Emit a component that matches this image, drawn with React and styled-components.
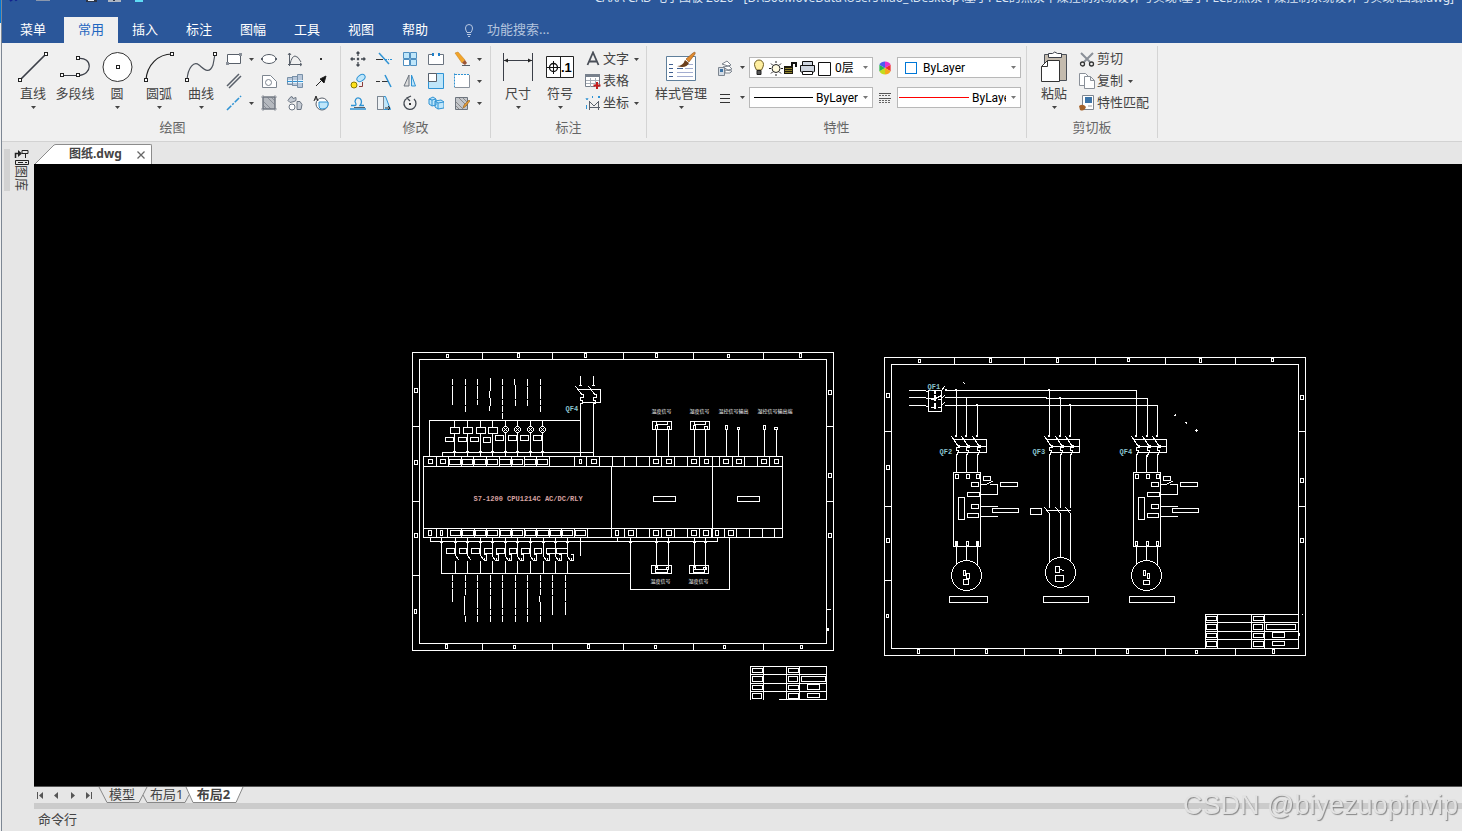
import React, { useState } from "react";
import styled, { createGlobalStyle } from "styled-components";

/* ---------- drawing data: [x1, y1, x2, y2] in screen units ---------- */

const sheetOneBoxes = [
  [412, 352, 833, 650], [419, 359, 826, 643],
  [446, 354, 448, 357], [517, 353, 519, 357], [584, 353, 586, 357],
  [655, 353, 657, 357], [727, 354, 729, 357], [799, 353, 801, 357],
  [414, 388, 417, 392], [414, 460, 417, 464], [414, 533, 417, 537], [414, 609, 416, 613],
  [828, 390, 831, 394], [828, 473, 831, 477], [828, 533, 831, 537],
  [445, 644, 447, 648], [513, 645, 515, 648], [587, 644, 589, 648],
  [654, 645, 656, 648], [723, 645, 725, 648], [800, 645, 802, 648],
];

const sheetOneTicks = [
  [482, 352, 482, 359], [552, 352, 552, 359], [623, 352, 623, 359], [693, 352, 693, 359], [763, 352, 763, 359],
  [482, 643, 482, 650], [552, 643, 552, 650], [623, 643, 623, 650], [693, 643, 693, 650], [763, 643, 763, 650],
  [412, 426, 419, 426], [412, 501, 419, 501], [412, 575, 419, 575],
  [826, 426, 833, 426], [826, 501, 833, 501], [826, 609, 830, 609],
];

const sheetTwoBoxes = [
  [884, 357, 1305, 655], [891, 364, 1298, 648],
  [918, 359, 920, 362], [989, 358, 991, 362], [1056, 358, 1058, 362],
  [1127, 358, 1129, 361], [1199, 358, 1201, 362], [1271, 358, 1273, 361],
  [886, 393, 889, 397], [886, 465, 889, 469], [886, 538, 889, 542], [886, 614, 888, 617],
  [1300, 395, 1303, 399], [1300, 478, 1303, 482], [1300, 538, 1303, 542],
  [917, 649, 919, 653], [985, 649, 987, 653], [1059, 649, 1061, 653],
  [1126, 649, 1128, 653], [1195, 650, 1197, 653], [1272, 649, 1274, 653],
];

const sheetTwoTicks = [
  [954, 357, 954, 364], [1024, 357, 1024, 364], [1095, 357, 1095, 364], [1165, 357, 1165, 364], [1235, 357, 1235, 364],
  [954, 648, 954, 655], [1024, 648, 1024, 655], [1095, 648, 1095, 655], [1165, 648, 1165, 655], [1235, 648, 1235, 655],
  [884, 431, 891, 431], [884, 506, 891, 506], [884, 580, 891, 580],
  [1298, 431, 1305, 431], [1298, 506, 1305, 506],
];

const titleBlockBoxes = [
  [752, 668, 762, 672], [788, 668, 798, 672],
  [752, 676, 762, 681], [788, 676, 797, 681], [801, 676, 825, 681],
  [752, 685, 762, 689], [788, 685, 798, 689], [807, 684, 819, 689],
  [752, 693, 761, 698], [788, 693, 798, 698], [807, 693, 819, 697],
  [1206, 616, 1216, 620], [1253, 616, 1263, 620],
  [1206, 624, 1216, 629], [1253, 624, 1262, 629], [1266, 624, 1295, 629],
  [1206, 633, 1216, 637], [1253, 633, 1263, 637], [1272, 632, 1284, 637],
  [1206, 641, 1216, 646], [1253, 641, 1263, 646], [1272, 641, 1284, 645],
];

const titleBlockLines = [
  [750, 666, 826, 666], [750, 674, 826, 674], [750, 683, 826, 683], [750, 691, 826, 691], [779, 699, 826, 699],
  [750, 666, 750, 699], [763, 666, 763, 699], [786, 666, 786, 699], [799, 666, 799, 699], [826, 666, 826, 699],
  [1205, 614, 1298, 614], [1205, 622, 1298, 622], [1205, 631, 1298, 631], [1205, 639, 1298, 639],
  [1205, 614, 1205, 648], [1217, 614, 1217, 648], [1251, 614, 1251, 648], [1264, 614, 1264, 648],
];

const terminalsTop = [
  [428, 432], [440, 445], [449, 460], [462, 472], [474, 485], [487, 497], [499, 510], [512, 522],
  [524, 535], [537, 547], [579, 581], [591, 596], [653, 658], [666, 671], [691, 696], [704, 708],
  [723, 728], [736, 741], [761, 766], [774, 778],
];
const terminalsBottom = [
  [428, 431], [440, 442], [450, 460], [462, 473], [475, 485], [487, 497], [500, 510], [512, 522],
  [525, 535], [537, 548], [550, 560], [562, 572], [575, 585], [615, 618], [628, 633], [653, 658],
  [666, 671], [691, 696], [703, 708], [715, 718], [728, 733],
];
const splitsTop = [
  436, 448, 461, 473, 486, 499, 511, 524, 536, 549, 574, 586, 599, 612, 624, 636, 649, 661, 674,
  687, 699, 712, 719, 732, 744, 757, 769,
];
const splitsBottom = [
  436, 447, 461, 474, 486, 499, 511, 524, 536, 549, 561, 574, 587, 611, 624, 636, 649, 661, 674,
  687, 699, 711, 712, 724, 736, 749, 762, 774,
];

const plcBoxes = [
  [423, 456, 782, 537], [423, 466, 782, 528],
  [653, 496, 675, 501], [737, 496, 759, 501],
  ...terminalsTop.map(([a, b]) => [a, 459, b, b - a > 8 ? 464 : 463]),
  ...terminalsBottom.map(([a, b]) => [a, 530, b, 535]),
];
const plcLines = [
  [611, 466, 611, 528], [712, 466, 712, 528],
  ...splitsTop.map((x) => [x, 456, x, 466]),
  ...splitsBottom.map((x) => [x, 528, x, 537]),
];

// output side: relays, lamps and their label frames
const relays = [454, 467, 480, 492];
const lamps = [505, 517, 530, 542];
const outputFrames = [
  [445, 437, 453, 441], [458, 437, 466, 441], [470, 437, 478, 441], [483, 437, 490, 442],
  [495, 435, 503, 440], [508, 435, 516, 440], [520, 435, 528, 440], [533, 435, 541, 440],
];

// input side: one switch per terminal
const inputs = [455, 467, 480, 492, 505, 517, 530, 543, 555, 567];
const inputFrames = [
  [446, 454], [459, 466], [471, 479], [484, 492], [496, 504], [509, 516], [521, 529], [534, 541],
  [546, 555], [556, 567],
];

const upperDashes = [
  [452, [379, 384, 386, 398, 399, 404]],
  [465, [379, 384, 386, 404, 406, 411]],
  [477, [379, 384, 386, 398, 400, 404]],
  [490, [378, 390, 398, 405]],
  [489, [391, 397, 406, 410]],
  [502, [379, 384, 386, 398, 400, 404, 406, 411, 413, 418]],
  [514, [379, 384]],
  [515, [385, 398, 400, 405]],
  [527, [379, 385, 387, 398, 400, 405]],
  [540, [379, 384, 386, 398, 400, 404, 406, 411]],
];
const lowerDashes = [
  [452, [575, 580, 582, 587, 589, 601]],
  [465, [575, 580, 582, 587, 589, 594, 616, 621]],
  [464, [596, 614]],
  [477, [575, 580, 582, 587, 589, 607, 609, 614, 616, 621]],
  [490, [575, 580, 582, 587, 589, 594, 596, 608, 610, 614, 616, 621]],
  [502, [575, 580, 582, 587, 589, 607, 609, 614, 616, 621]],
  [515, [575, 580, 582, 587, 589, 607, 609, 614, 616, 621]],
  [527, [575, 580, 582, 587, 589, 607, 609, 614, 616, 621]],
  [540, [575, 580, 582, 587, 589, 594, 602, 614, 616, 621]],
  [539, [596, 601]],
  [552, [575, 580, 582, 587, 589, 594, 596, 614]],
  [565, [575, 580, 582, 587, 589, 600, 602, 614]],
];

const dashLines = [...upperDashes, ...lowerDashes].flatMap(([x, ys]) => {
  const out = [];
  for (let i = 0; i < ys.length; i += 2) out.push([x, ys[i], x, ys[i + 1]]);
  return out;
});

const wiringLines = [
  [429, 420, 580, 420], [429, 420, 429, 456], [442, 452, 593, 452], [442, 452, 442, 456],
  [580, 405, 580, 456], [593, 405, 593, 456], [580, 376, 580, 385], [593, 376, 593, 385],
  [656, 429, 656, 456], [668, 429, 668, 456], [694, 429, 694, 456], [705, 429, 705, 456],
  [726, 429, 726, 456], [738, 429, 738, 456], [764, 429, 764, 456], [776, 429, 776, 456],
  [430, 541, 717, 541], [430, 537, 430, 541], [717, 537, 717, 541], [617, 537, 617, 541],
  [441, 537, 441, 573], [441, 573, 630, 573], [630, 537, 630, 589], [630, 589, 729, 589],
  [729, 537, 729, 589], [580, 537, 580, 555],
  [656, 537, 656, 567], [668, 537, 668, 568], [694, 537, 694, 567], [705, 537, 705, 568],
];
const wiringBoxes = [
  [652, 421, 671, 429], [656, 421, 667, 424], [655, 425, 657, 429], [667, 426, 669, 429],
  [690, 421, 709, 429], [694, 421, 705, 424], [693, 425, 695, 429], [704, 426, 707, 429],
  [651, 565, 671, 573], [655, 565, 657, 569], [655, 569, 667, 572], [666, 567, 668, 569],
  [689, 565, 708, 573], [693, 565, 695, 569], [693, 569, 704, 572], [703, 567, 706, 569],
  [725, 425, 727, 429], [737, 427, 739, 429], [763, 425, 765, 429], [774, 427, 777, 429],
];

const boxPath = (list) => list.map(([a, b, c, d]) => `M${a} ${b}H${c}V${d}H${a}Z`).join("");
const linePath = (list) => list.map(([a, b, c, d]) => `M${a} ${b}L${c} ${d}`).join("");

const breakerPole = (x) =>
  `M${x - 5} 436L${x} 443M${x} 443l1 2h2v2h-3v3h2v2h-1v2h-1v2M${x - 1} 435h1v1h-1z`;

const Breaker = ({ poles, label }) => {
  const [a, , c] = poles;
  return (
    <>
      <path d={`M${a - 2} 439H${c + 9}V452H${a + 2}M${a + 2} 446H${c + 9}`} />
      {poles.map((x) => (
        <path key={x} d={breakerPole(x)} />
      ))}
      <CadText x={a - 17} y={453}>{label}</CadText>
    </>
  );
};

const Drive = ({ dx, solid }) => (
  <g transform={`translate(${dx} 0)`}>
    <path
      d={boxPath([
        [953, 472, 980, 546], [955, 474, 958, 478], [966, 474, 969, 478], [976, 474, 979, 478],
        [971, 482, 978, 486], [967, 492, 979, 496], [971, 504, 978, 508], [967, 513, 978, 517],
        [958, 497, 964, 519], [955, 541, 957, 545], [966, 541, 968, 545], [976, 541, 978, 545],
        [983, 476, 990, 480], [1000, 482, 1017, 486], [992, 508, 1018, 512],
      ])}
    />
    {solid && <path d="M956 541v4M977 541v4" />}
    <path d="M980 484h5l7 -3M990 484H997V494H980M980 506H997M980 516H997" />
    <path d="M956 455V472M966 455V472M977 455V472M956 546V564M966 546V560M977 546V565" />
  </g>
);

const Schematic = () => (
  <Drawing width="1428" height="622" viewBox="34 164 1428 622" role="img" aria-label="图纸">
    <g transform="translate(0.5 0.5)">
      <path d={boxPath(sheetOneBoxes) + linePath(sheetOneTicks)} />
      <path d={boxPath(sheetTwoBoxes) + linePath(sheetTwoTicks)} />
      <path d={boxPath(titleBlockBoxes) + linePath(titleBlockLines)} />
      <path d={boxPath(plcBoxes) + linePath(plcLines)} />
      <path d={linePath(dashLines)} />
      <path d={boxPath(wiringBoxes) + linePath(wiringLines)} />
      <path d={boxPath(outputFrames)} />

      {relays.map((x) => (
        <path key={x} d={`M${x} 420V427M${x - 4} 427H${x + 5}V433H${x - 4}ZM${x} 433V456M${x - 1} 451h2`} />
      ))}
      {lamps.map((x) => (
        <path
          key={x}
          d={`M${x} 420V426M${x} 432V456M${x - 1} 451h2M${x - 1} 426h2l2 2v2l-2 2h-2l-2 -2v-2zM${x - 2} 427l4 4M${x + 2} 427l-4 4`}
        />
      ))}

      {/* QF4 two-pole breaker */}
      <path d="M578 389H600V402H583" />
      {[580, 593].map((x) => (
        <path key={x} d={`M${x - 5} 386L${x} 392l1 2h2v3h-3v3h2v3h-2v3M${x - 1} 385h2`} />
      ))}
      <CadText x={565} y={410}>QF4</CadText>

      {inputs.map((x, i) => (
        <path
          key={x}
          d={
            `M${x} 537V${i > 2 ? 556 : 555}l3 4M${x} 561V573M${x - 1} 542h2` +
            `M${inputFrames[i][0]} 548H${inputFrames[i][1]}V553H${inputFrames[i][0]}Z` +
            (i > 1 ? `M${x + 4} 554h2v6h-2v-2` : "")
          }
        />
      ))}
      {[656, 668, 694, 705, 630, 441].map((x) => (
        <path key={x} d={`M${x - 1} 542h2`} />
      ))}
      <path d="M827 628v2M828 628v2" />

      <CadText x={473} y={500} $warm>S7-1200 CPU1214C AC/DC/RLY</CadText>
      <TinyText x={651} y={412}>温度信号</TinyText>
      <TinyText x={689} y={412}>湿度信号</TinyText>
      <TinyText x={718} y={412}>温控信号输出</TinyText>
      <TinyText x={757} y={412}>湿控信号输出端</TinyText>
      <TinyText x={650} y={582}>温度信号</TinyText>
      <TinyText x={688} y={582}>湿度信号</TinyText>

      {/* main supply */}
      <path d="M909 390H925l3 2M909 397H925l3 2M909 405H925l3 2M928 390H941V411H928Z" />
      <path d="M931 390h3v3h1v-3h3M931 399h3M938 399h3M931 407h3M938 407h3M934 395v5M935 395v5M934 403v5M935 403v5M928 398h6M935 398l6 -3M941 390l3 -4M941 398l3 -3M941 405l3 -3M945 389h1M945 397h1M945 405h1" />
      <path d="M945 390H1136V436M945 397H1046V398H1147V436M945 405H1157V436" />
      <path d="M956 390V436M966 398V436M977 405V436M1049 390V436M1060 398V436M1070 405V436" />
      <path d="M955 389h1M965 397h1M976 404h1M1048 389h1M1059 397h1M1069 404h1" />
      <CadText x={927} y={388}>QF1</CadText>
      <Breaker poles={[956, 966, 977]} label="QF2" />
      <Breaker poles={[1049, 1060, 1070]} label="QF3" />
      <Breaker poles={[1136, 1147, 1157]} label="QF4" />
      <Drive dx={0} solid />
      <Drive dx={180} />

      {/* contactor in the middle branch */}
      <path d="M1030 508H1041V514H1030ZM1047 510H1070" />
      {[1049, 1060, 1070].map((x) => (
        <path key={x} d={`M${x} 455V507M${x - 5} 507L${x} 513V${x === 1060 ? 557 : 561}`} />
      ))}

      <circle cx="966" cy="575" r="15" />
      <circle cx="1060" cy="572" r="15" />
      <circle cx="1146" cy="575" r="15" />
      <path
        d={boxPath([
          [963, 570, 965, 575], [966, 573, 969, 578], [963, 579, 968, 584],
          [1055, 566, 1059, 572], [1055, 575, 1063, 581],
          [1143, 570, 1145, 575], [1147, 573, 1149, 578], [1143, 580, 1149, 584],
          [949, 596, 987, 602], [1043, 596, 1088, 602], [1129, 596, 1174, 602],
        ])}
      />
      <path d="M1060 569l3 1M963 382h0M964 383h0M1174 415h1M1175 414h0M1186 423h0M1185 422h1M1195 430h2M1196 429v2M1302 614h0M1299 633v2" />
    </g>
  </Drawing>
);

/* ---------- icons ---------- */

const Caret = () => (
  <CaretSvg width="5" height="3" viewBox="0 0 5 3">
    <path d="M0 0h5L2.500 3z" fill="currentColor" />
  </CaretSvg>
);

const Node = ({ x, y }) => <rect x={x - 1.5} y={y - 1.5} width="3" height="3" fill="#fff" stroke="#222" />;

const bigIcons = {
  line: (
    <>
      <path d="M3.500 28.500L28.500 3.500" stroke="#3b3f48" strokeWidth="1.700" />
      <Node x={3} y={29} />
      <Node x={29} y={3} />
    </>
  ),
  polyline: (
    <>
      <path d="M3 24.500H19M19 7.500C34 5.500 34 24.500 19 24.500" stroke="#3b3f48" strokeWidth="1.200" />
      <Node x={3} y={24} />
      <Node x={19} y={24} />
      <Node x={19} y={7} />
    </>
  ),
  circle: (
    <>
      <circle cx="16.500" cy="16" r="14.500" fill="#fff" stroke="#333" />
      <Node x={17} y={16} />
    </>
  ),
  arc: (
    <>
      <path d="M3 29C4 14 15 3 29 3" stroke="#222" strokeWidth="1.200" />
      <Node x={3} y={29} />
      <Node x={29} y={3} />
    </>
  ),
  spline: (
    <>
      <path d="M2 29C3 16 9 10 14 14S24 24 28 14Q29 9 30 3" stroke="#4d535c" strokeWidth="1.200" />
      <Node x={2} y={29} />
      <Node x={30} y={3} />
    </>
  ),
  dimension: (
    <>
      <path d="M1.500 2V30M30.500 2V30M2 9.500H30" stroke="#3b3f48" />
      <path d="M2 9.500l4-2v4zM30 9.500l-4-2v4z" fill="#222" />
    </>
  ),
  symbol: (
    <>
      <path d="M2.500 5.500h27v21h-27zM16.500 5.500v21" fill="#fff" stroke="#222" />
      <circle cx="9.500" cy="16.500" r="4" stroke="#111" strokeWidth="1.300" />
      <path d="M3 16.500h13M9.500 10v13" stroke="#111" />
      <text x="17" y="21" fontSize="13" fontWeight="700" fontFamily="Liberation Sans, sans-serif" fill="#000">.1</text>
    </>
  ),
  style: (
    <>
      <path d="M1.500 5.500h29v24h-29z" fill="#fff" stroke="#5f7f9b" />
      <path d="M4 13.500h4M4 17.500h4M4 21.500h4M4 25.500h4M12 17.500h6" stroke="#3f5f90" />
      <path d="M20 17.500h8M12 21.500h16M12 25.500h16M22 13.500h6" stroke="#a3add0" />
      <path d="M21 8l7-6q3-2 2 1l-6 8z" fill="#e08a2d" stroke="#8a4b16" strokeWidth=".6" />
      <path d="M12 15q6 0 8-6l4 3q-3 6-12 3z" fill="#6b3f1d" />
    </>
  ),
  paste: (
    <>
      <path d="M6.500 3.500h22v26h-22z" fill="#c4bbae" stroke="#4a4f57" />
      <path d="M10.500 2.500h4q2-3 5 0h4v4h-13z" fill="#fff" stroke="#3b3f48" />
      <path d="M9.500 9.500h12v21h-18v-15z" fill="#fff" stroke="#333" />
      <path d="M9.500 9.500v6h-6" stroke="#333" />
    </>
  ),
};

const G = "#59606a";
const B = "#2f93d4";
const L = "#bfe6fa";

const smallIcons = {
  rect: (
    <>
      <path d="M1.500 3.500h13v9h-13z" fill="#fff" stroke={G} />
      <path d="M13 2h3v3h-3zM0 11h3v3H0z" fill="#8a9099" />
    </>
  ),
  ellipse: (
    <>
      <ellipse cx="8" cy="8" rx="7" ry="4.500" fill="#fff" stroke={G} />
      <path d="M0 7h2v2H0zM14 7h2v2h-2zM7 3h2v1H7zM7 12h2v1H7z" fill={G} />
    </>
  ),
  graph: <path d="M2.500 2v13M1 13.500h13M3 13Q5 5 8 5t6 6M1 4l1.500-2L4 4M13 12l2 1.500-2 1.500" stroke={G} />,
  point: <path d="M7 7h2v2H7z" fill="#333" />,
  parallel: <path d="M1 13L13 1M3 15L15 3" stroke={G} strokeWidth="1.500" />,
  hole: (
    <>
      <path d="M1.500 2.500h8l6 6v6h-14z" fill="#fff" stroke="#7d858f" />
      <circle cx="7.500" cy="9.500" r="3" stroke="#7d858f" />
    </>
  ),
  shaft: (
    <>
      <path d="M.5 4.500h5v-1h5v-2h5v13h-5v-2h-5v-1h-5z" fill="#b9c8da" stroke="#7890a8" />
      <path d="M1 7h15v3H1z" fill="#e6f5ff" />
      <path d="M0 8.500h16" stroke={B} />
      <path d="M5.500 3v10M10.500 2v12" stroke="#7890a8" />
    </>
  ),
  arrow: <path d="M3 13l6-6M13 3l-2 7-4-4z" fill="#111" stroke="#222" />,
  centerline: <path d="M1 15L15 1" stroke={B} strokeWidth="1.600" strokeDasharray="6 1.500 2 1.500" />,
  hatch: (
    <>
      <path d="M2 2h12v12H2z" fill="#b5b9bf" stroke={G} />
      <path d="M2 6l8 8M2 10l4 4M6 2l8 8M10 2l4 4M0 2h16M2 0v16M14 0v16M0 14h16" stroke="#777d86" strokeWidth=".7" />
    </>
  ),
  gears: (
    <>
      <path d="M3 2.500l2-1 1 2 3-1v3l-2 1-4 1-2-2zM10 6.500h3l2 3-1 5h-4z" fill="#c6ccd4" stroke="#6c7683" />
      <circle cx="5" cy="12" r="3" fill="#fff" stroke="#6c7683" />
    </>
  ),
  detail: (
    <>
      <circle cx="9" cy="9" r="6" fill="#fff" stroke={G} />
      <path d="M6 7h9q1 7-6 7-3 0-3-3z" fill={L} stroke={B} />
      <path d="M1 6l2-5 2 5M2 4h2" stroke="#222" />
    </>
  ),
  move: <path d="M8 1v4M8 11v4M1 8h4M11 8h4M6.500 2.500L8 1l1.500 1.500M6.500 13.500L8 15l1.500-1.500M2.500 6.500L1 8l1.500 1.500M13.500 6.500L15 8l-1.500 1.500M7.500 7.500h1v1h-1z" stroke="#444a52" strokeWidth="1.300" />,
  trim: (
    <>
      <path d="M0 8.500h7" stroke="#333" />
      <path d="M9 8.500h2M12 8.500h1M14 8.500h2" stroke={B} />
      <path d="M3 2l10 11" stroke={B} strokeWidth="1.500" />
    </>
  ),
  array: (
    <>
      <path d="M1.500 1.500h6v6h-6zM8.500 8.500h6v6h-6z" fill={L} stroke="#4f8fc0" />
      <path d="M8.500 1.500h6v6h-6z" fill={L} stroke="#4f8fc0" />
      <path d="M1.500 8.500h6v6h-6z" fill="#fff" stroke="#4f8fc0" />
    </>
  ),
  breakLine: (
    <>
      <path d="M5 3.500H.5v10h15v-10H11" fill="#fff" stroke="#6a737f" />
      <path d="M5 2v3M11 2v3" stroke="#1f7fc8" strokeWidth="2" />
    </>
  ),
  erase: (
    <>
      <path d="M1 2l3-1 7 8-3 3z" fill="#f2a52b" stroke="#c47a12" strokeWidth=".5" />
      <path d="M8 12l3-3 2 3-2 2z" fill="#9c5636" />
      <path d="M8 14.500h8" stroke={G} />
    </>
  ),
  copy: (
    <>
      <circle cx="4" cy="12" r="3" fill="#ffe11a" stroke="#8a7a00" />
      <ellipse cx="11" cy="5" rx="4.500" ry="3" transform="rotate(-35 11 5)" fill={L} stroke={B} />
      <path d="M9 13.500h3.500V9" stroke="#8a3b3b" />
    </>
  ),
  extend: (
    <>
      <path d="M0 8.500h4M6 8.500h6" stroke="#333" />
      <path d="M9 2l6 12" stroke={B} strokeWidth="1.500" />
    </>
  ),
  mirror: (
    <>
      <path d="M7 2v11H2z" fill="#ddd" stroke="#6d757f" />
      <path d="M9.500 2v11h4z" fill={L} stroke={B} />
    </>
  ),
  scale: (
    <>
      <path d="M.5.5h15v15H.5z" fill={L} stroke={B} />
      <path d="M.5.5h8v8h-8z" fill="#fff" stroke={G} />
    </>
  ),
  select: (
    <>
      <path d="M1 2h14v12H1z" fill="#fff" />
      <path d="M.5.500V14M1 1.500H15" stroke={B} strokeDasharray="2 1" />
      <path d="M15.500 2v12.500H.5" stroke="#8a929c" />
    </>
  ),
  offset: (
    <>
      <path d="M0 14h16M1 10.500h4q2 0 0-4 1-5 5-3 3 3 0 7h4" stroke={B} strokeWidth="1.300" />
      <path d="M4 12.500h11" stroke={G} />
    </>
  ),
  stretch: (
    <>
      <path d="M1.500 1.500h8l5 13h-13z" fill={L} stroke={B} />
      <path d="M1.500 1.500h6v13h-6z" fill="#eef2f5" stroke="#7d858f" />
      <path d="M9 13h5M12 11l2 2-2 2" stroke="#333" />
    </>
  ),
  rotate: (
    <>
      <path d="M5 3.200A6 6 0 1 0 12 4M9 1L5 3l3 3" stroke="#444a52" strokeWidth="1.300" />
      <path d="M7 8h2v2H7z" fill="#333" />
    </>
  ),
  explode: (
    <>
      <path d="M1 4l4-2 3 2v6l-4 1-3-2zM7 6l6-1 3 2v6l-6 1-3-2z" fill={L} stroke={B} />
      <path d="M1 4l3 1 4-1M4 5v6M7 6l3 2 6-1M10 8v6" stroke={B} />
    </>
  ),
  editHatch: (
    <>
      <path d="M1.500 2.500h12v12h-12z" fill="#c3c6ca" stroke="#6d747d" />
      <path d="M2 7l7 7M2 11l3 3M5 3l8 8M9 3l4 4" stroke="#888" />
      <path d="M9 13l1-3 5-5 1 1-5 6z" fill="#e59b34" stroke="#94601a" strokeWidth=".6" />
    </>
  ),
  text: <path d="M2.500 14L8 1.500 13.500 14M4.500 10.500h7" stroke="#4a4f58" strokeWidth="1.800" />,
  table: (
    <>
      <path d="M.5 1.500h14v12H.5z" fill="#fff" stroke="#77808c" />
      <path d="M0 1h15v3H0z" fill="#77808c" />
      <path d="M1 7.500h13M1 10.500h13M5.500 5v9M10.500 5v9" stroke="#a8afb8" />
      <path d="M12 9v7M8.500 12.500h7" stroke="#c41e1e" strokeWidth="2" />
    </>
  ),
  coord: (
    <>
      <path d="M4.500 15V6M4 12.500h11M5 7l4 4 5-5M13.500 6v9" stroke={G} />
      <path d="M1 3l1 2 1-2M1.500 10v4M7.500 1v2M13 1l2 2M15 1l-2 2" stroke={B} />
    </>
  ),
  layers: (
    <>
      <path d="M5 4l5-3 4 4-3 1zM6 7l6-1 3 3-4 1zM8 10l7 1-2 2H8z" fill="#fff" stroke="#7d858f" />
      <path d="M1.500 7.500h6v8h-6z" fill="#d5dde6" stroke="#7d858f" />
      <path d="M3 9h3v3H3z" fill="#3c74a8" />
    </>
  ),
  lines: <path d="M3 4.500h10M3 8.500h10M3 12.500h10" stroke="#333" />,
  linetype: (
    <>
      <path d="M2 3.500h12M2 8.500h12" stroke="#555" />
      <path d="M2 5.500h12M2 10.500h12M2 12.500h12" stroke="#666" strokeDasharray="2 1" />
    </>
  ),
  wheel: (
    <>
      <path d="M8 8V1.500a6.500 6.500 0 0 1 5.600 3.300z" fill="#e62fd0" />
      <path d="M8 8l5.600-3.200v6.400z" fill="#f02b2b" />
      <path d="M8 8l5.600 3.200A6.500 6.500 0 0 1 8 14.500z" fill="#f6a81c" />
      <path d="M8 8v6.500a6.500 6.500 0 0 1-5.600-3.300z" fill="#c3dc1e" />
      <path d="M8 8l-5.600 3.200V4.800z" fill="#24b84a" />
      <path d="M8 8L2.400 4.800A6.500 6.500 0 0 1 8 1.500z" fill="#4d59f0" />
    </>
  ),
  cut: (
    <>
      <path d="M2 2l9 9M14 2L5 11" stroke="#8a9098" strokeWidth="2" />
      <circle cx="3.500" cy="13" r="2" stroke="#333" strokeWidth="1.300" />
      <circle cx="12.500" cy="13" r="2" stroke="#333" strokeWidth="1.300" />
    </>
  ),
  duplicate: (
    <>
      <path d="M.5.5h6l3 3v9h-9z" fill="#fff" stroke="#8a9099" />
      <path d="M5.500 3.500h6l4 4v8h-10zM11.500 3.500v4h4" fill="#fff" stroke="#8a9099" />
    </>
  ),
  match: (
    <>
      <path d="M3.500.5h11v14h-11z" fill="#fff" stroke="#7d858f" />
      <path d="M6 2h7v6H6z" fill="#3c74a8" />
      <path d="M0 11q4-3 7 1-2 5-6 3z" fill="#a5622a" />
      <path d="M9 11h4" stroke="#999" />
    </>
  ),
};

const BigIcon = ({ name }) => (
  <svg width="32" height="32" viewBox="0 0 32 32" fill="none">{bigIcons[name]}</svg>
);
const SmallIcon = ({ name }) => (
  <svg width="16" height="16" viewBox="0 0 16 16" fill="none">{smallIcons[name]}</svg>
);

const LayerIcons = () => (
  <svg width="82" height="19" viewBox="0 0 82 19" fill="none">
    <path d="M4.500 6.500a4.500 4.500 0 0 1 9 0q0 2-2 5.500h-5q-2-3.500-2-5.500z" fill="#ffefa0" stroke="#6d5c22" />
    <path d="M7 12.500h4v4H7z" fill="#555" stroke="#222" />
    <circle cx="26" cy="10.500" r="4" fill="#fffbe0" stroke="#222" />
    <path d="M26 3v2M26 16v2M19 10.500h2M31 10.500h2M21 5.500l1.500 1.500M31 5.500l-1.500 1.500M21 15.500l1.500-1.500M31 15.500l-1.500-1.500" stroke="#222" />
    <path d="M34 8h9v8h-9z" fill="#1d1b10" />
    <path d="M35 10.500h7M35 12.500h7M35 14.500h7" stroke="#8f822c" />
    <path d="M41 8V4h6v5h-2V6h-2v2z" fill="#111" />
    <path d="M52.500 7V3.500h10V7M50.500 7.500h14v6l-2 1h-10l-2-1z" fill="#cfd6e0" stroke="#111" />
    <path d="M52.500 13.500h10v3h-10z" fill="#fff" stroke="#111" />
    <path d="M68.500 4.500h12v13h-12z" fill="#fff" stroke="#111" />
  </svg>
);

const QuickIcons = () => (
  <QuickSvg width="200" height="16" viewBox="0 0 200 16" fill="none">
    <path d="M-24 11l4-3 2 2 4-3" stroke="#11218f" strokeWidth="2" />
    <path d="M2 10h14v1H2z" fill="#8a97ad" />
    <path d="M52 9h11v3H52z" fill="#2c3444" />
    <path d="M54 9h6v2h-6z" fill="#e8edf3" />
    <path d="M74 9h13v3H74z" fill="#aeb6c2" />
    <path d="M79 9h2v2h-2z" fill="#2c3444" />
    <path d="M101 9h8v3h-8z" fill="#5fdcf5" />
  </QuickSvg>
);

/* ---------- pieces of the window ---------- */

const BigTool = ({ icon, label, menu = true, wide }) => (
  <BigButton type="button" $wide={wide}>
    <BigIcon name={icon} />
    <BigLabel>{label}</BigLabel>
    {menu && <Caret />}
  </BigButton>
);

const IconTool = ({ icon, label, menu }) => (
  <IconButton type="button" aria-label={label}>
    <SmallIcon name={icon} />
    {menu && <Caret />}
  </IconButton>
);

const TextTool = ({ icon, label, menu }) => (
  <TextButton type="button">
    <SmallIcon name={icon} />
    <ToolLabel>{label}</ToolLabel>
    {menu && <Caret />}
  </TextButton>
);

const Combo = ({ label, value, children }) => (
  <ComboBox>
    {children}
    <ComboSelect aria-label={label} defaultValue={value}>
      <option>{value}</option>
    </ComboSelect>
    <Caret />
  </ComboBox>
);

const ribbonTabs = ["常用", "插入", "标注", "图幅", "工具", "视图", "帮助"];

const App = () => {
  const [tab, setTab] = useState("常用");
  const [keyword, setKeyword] = useState("");

  return (
    <Page>
      <GlobalStyle />
      <AppWindow>
        <Header>
          <TitleBar>
            <QuickIcons />
            <Title>
              CAXA CAD 电子图板 2020 - [D:\360MoveData\Users\liao_\Desktop\基于PLC的热泵干燥控制系统设计与实现\基于PLC的热泵干燥控制系统设计与实现\图纸.dwg]
            </Title>
          </TitleBar>
          <TabRow>
            <MenuButton type="button">菜单</MenuButton>
            {ribbonTabs.map((name) => (
              <RibbonTab key={name} type="button" $active={name === tab} onClick={() => setTab(name)}>
                {name}
              </RibbonTab>
            ))}
            <Search>
              <svg width="10" height="14" viewBox="0 0 10 14" fill="none" stroke="#b9c9e2">
                <path d="M3 9.500Q1.500 7 1.500 5a3.500 3.500 0 0 1 7 0q0 2-1.500 4.500zM3 11.500h4M4 13.500h2" />
              </svg>
              <SearchInput
                aria-label="功能搜索"
                placeholder="功能搜索..."
                value={keyword}
                onChange={(e) => setKeyword(e.target.value)}
              />
            </Search>
          </TabRow>
        </Header>

        <Ribbon>
          <Group $width={336}>
            <GroupBody $left={7}>
              <BigTool icon="line" label="直线" />
              <BigTool icon="polyline" label="多段线" menu={false} />
              <BigTool icon="circle" label="圆" />
              <BigTool icon="arc" label="圆弧" />
              <BigTool icon="spline" label="曲线" />
              <ToolGrid $columns="35px 26px 26px 26px">
                <IconTool icon="rect" label="矩形" menu />
                <IconTool icon="ellipse" label="椭圆" />
                <IconTool icon="graph" label="公式曲线" />
                <IconTool icon="point" label="点" />
                <IconTool icon="parallel" label="平行线" />
                <IconTool icon="hole" label="局部放大" />
                <IconTool icon="shaft" label="孔轴" />
                <IconTool icon="arrow" label="箭头" />
                <IconTool icon="centerline" label="中心线" menu />
                <IconTool icon="hatch" label="剖面线" />
                <IconTool icon="gears" label="齿轮" />
                <IconTool icon="detail" label="局部视图" />
              </ToolGrid>
            </GroupBody>
            <GroupName>绘图</GroupName>
          </Group>

          <Group $width={150}>
            <GroupBody $left={5}>
              <ToolGrid $columns="26px 26px 26px 26px 34px">
                <IconTool icon="move" label="平移" />
                <IconTool icon="trim" label="裁剪" />
                <IconTool icon="array" label="阵列" />
                <IconTool icon="breakLine" label="打断" />
                <IconTool icon="erase" label="删除" menu />
                <IconTool icon="copy" label="平移复制" />
                <IconTool icon="extend" label="延伸" />
                <IconTool icon="mirror" label="镜像" />
                <IconTool icon="scale" label="缩放" />
                <IconTool icon="select" label="选择" menu />
                <IconTool icon="offset" label="等距线" />
                <IconTool icon="stretch" label="拉伸" />
                <IconTool icon="rotate" label="旋转" />
                <IconTool icon="explode" label="分解" />
                <IconTool icon="editHatch" label="编辑填充" menu />
              </ToolGrid>
            </GroupBody>
            <GroupName>修改</GroupName>
          </Group>

          <Group $width={156}>
            <GroupBody $left={6}>
              <BigTool icon="dimension" label="尺寸" />
              <BigTool icon="symbol" label="符号" />
              <ToolStack>
                <TextTool icon="text" label="文字" menu />
                <TextTool icon="table" label="表格" />
                <TextTool icon="coord" label="坐标" menu />
              </ToolStack>
            </GroupBody>
            <GroupName>标注</GroupName>
          </Group>

          <Group $width={380}>
            <GroupBody $left={3}>
              <BigTool icon="style" label="样式管理" wide />
              <PropertyGrid>
                <IconTool icon="layers" label="图层" menu />
                <Combo label="当前图层" value="0层">
                  <LayerIcons />
                </Combo>
                <IconTool icon="wheel" label="颜色" />
                <Combo label="当前颜色" value="ByLayer">
                  <ColorChip />
                </Combo>
                <IconTool icon="lines" label="线型" menu />
                <Combo label="当前线型" value="ByLayer">
                  <LineSample $width={59} $left={4} $color="#000" />
                </Combo>
                <IconTool icon="linetype" label="线宽" />
                <Combo label="当前线宽" value="ByLayer">
                  <LineSample $width={70} $left={1} $color="#f00" />
                </Combo>
              </PropertyGrid>
            </GroupBody>
            <GroupName>特性</GroupName>
          </Group>

          <Group $width={131}>
            <GroupBody $left={6}>
              <BigTool icon="paste" label="粘贴" />
              <ToolStack>
                <TextTool icon="cut" label="剪切" />
                <TextTool icon="duplicate" label="复制" menu />
                <TextTool icon="match" label="特性匹配" />
              </ToolStack>
            </GroupBody>
            <GroupName>剪切板</GroupName>
          </Group>
        </Ribbon>

        <Workspace>
          <Dock>
            <DockGrip />
            <DockTab type="button">
              <svg width="16" height="16" viewBox="0 0 16 16" fill="none" stroke="#222">
                <path d="M1.500 9V4.500H5" strokeWidth="1.500" />
                <path d="M4 1l4 3.500L4 8z" fill="#222" stroke="none" />
                <path d="M8 1.500h6v3H8zM11.500 5v4M1.500 11.500h13v4h-13zM4 13.500h5M11 13.500h2" />
              </svg>
              <DockName>图库</DockName>
            </DockTab>
          </Dock>
          <Main>
            <DocTabs>
              <svg width="21" height="20" viewBox="0 0 21 20">
                <path d="M0 20L19 1q1-1 2-1V20z" fill="#fff" />
                <path d="M0 20L19 1q1-.5 2-.5" fill="none" stroke="#8c8c8c" />
              </svg>
              <DocTab>
                <DocName>图纸.dwg</DocName>
                <CloseButton type="button" aria-label="关闭">
                  <svg width="8" height="8" viewBox="0 0 8 8" stroke="#666" strokeWidth="1.300">
                    <path d="M.5.5l7 7M7.500.5l-7 7" />
                  </svg>
                </CloseButton>
              </DocTab>
            </DocTabs>
            <Canvas>
              <Schematic />
            </Canvas>
            <LayoutBar>
              <Pager type="button" aria-label="第一个">
                <svg width="7" height="7" viewBox="0 0 7 7"><path d="M0 0h1v7H0zM6 0v7L2 3.500z" fill="#555" /></svg>
              </Pager>
              <Pager type="button" aria-label="上一个">
                <svg width="7" height="7" viewBox="0 0 7 7"><path d="M5 0v7L1 3.500z" fill="#555" /></svg>
              </Pager>
              <Pager type="button" aria-label="下一个">
                <svg width="7" height="7" viewBox="0 0 7 7"><path d="M2 0v7l4-3.500z" fill="#555" /></svg>
              </Pager>
              <Pager type="button" aria-label="最后一个">
                <svg width="7" height="7" viewBox="0 0 7 7"><path d="M6 0h1v7H6zM1 0v7l4-3.500z" fill="#555" /></svg>
              </Pager>
              <svg width="10" height="16" viewBox="0 0 10 16" fill="none" stroke="#888">
                <path d="M1 0l8 15.500h1" />
              </svg>
              <LayoutTab type="button" $width={28}>模型</LayoutTab>
              <svg width="14" height="16" viewBox="0 0 14 16" fill="none" stroke="#888">
                <path d="M0 15.500h3L11 0M7 8l4 7.500h3" />
              </svg>
              <LayoutTab type="button" $width={33}>布局1</LayoutTab>
              <svg width="12" height="16" viewBox="0 0 12 16" fill="none" stroke="#888">
                <path d="M3 0h9v16h-2z" fill="#fff" stroke="none" />
                <path d="M0 15.500h2L6 8M3 0l7 15.500h2" />
              </svg>
              <LayoutTab type="button" $width={37} $active>布局2</LayoutTab>
              <svg width="12" height="16" viewBox="0 0 12 16" fill="none" stroke="#888">
                <path d="M0 0h11L4 16H0z" fill="#fff" stroke="none" />
                <path d="M0 15.500h4L11 0" />
              </svg>
            </LayoutBar>
            <Splitter />
            <CommandLine>命令行</CommandLine>
          </Main>
        </Workspace>
      </AppWindow>
      <Watermark>CSDN @biyezuopinvip</Watermark>
    </Page>
  );
};

/* ---------- styles ---------- */

const GlobalStyle = createGlobalStyle`
  * {
    box-sizing: border-box;
  }
  body {
    margin: 0;
    overflow: hidden;
    font-family: "Noto Sans", "Noto Sans CJK SC", sans-serif;
    font-size: 13px;
    color: #444;
  }
  button {
    border: none;
    background: none;
    padding: 0;
    font: inherit;
    color: inherit;
    white-space: nowrap;
  }
  svg {
    flex: none;
    display: block;
  }
`;

const Page = styled.div`
  height: 100vh;
  padding-left: 1px;
  background: linear-gradient(#0078d7 23px, #f0f0f0 23px);
`;

const AppWindow = styled.div`
  height: 100%;
  display: flex;
  flex-direction: column;
  border-left: 1px solid #7d8794;
  background: #e6e6e6;
`;

const Header = styled.header`
  background: #2b579a;
  color: #fff;
`;

const TitleBar = styled.div`
  height: 17px;
  display: flex;
  justify-content: space-between;
  overflow: hidden;
`;

const QuickSvg = styled.svg`
  margin: -10px 0 0 32px;
  overflow: visible;
`;

const Title = styled.div`
  margin: -10px 8px 0 0;
  font-size: 12px;
  line-height: 16px;
  color: #dbe5f3;
  white-space: nowrap;
`;

const TabRow = styled.nav`
  display: flex;
  height: 26px;
`;

const MenuButton = styled.button`
  width: 62px;
  padding-bottom: 3px;
`;

const RibbonTab = styled.button`
  width: 54px;
  padding-bottom: 3px;
  background: ${({ $active }) => ($active ? "#f0f0f0" : "transparent")};
  color: ${({ $active }) => ($active ? "#1f66c0" : "#fff")};
`;

const Search = styled.label`
  display: flex;
  align-items: center;
  gap: 13px;
  margin-left: 22px;
`;

const SearchInput = styled.input`
  width: 120px;
  border: none;
  outline: none;
  padding: 0 0 3px;
  background: transparent;
  color: #fff;
  font: inherit;
  &::placeholder {
    color: #b3c4de;
  }
`;

const Ribbon = styled.section`
  display: flex;
  padding: 3px 0 3px 3px;
  background: #f0f0f0;
  border-bottom: 1px solid #d2d2d2;
  height: 99px;
`;

const Group = styled.div`
  width: ${({ $width }) => $width}px;
  flex: none;
  padding-top: 2px;
  border-right: 1px solid #d4d4d4;
`;

const GroupBody = styled.div`
  display: flex;
  height: 66px;
  padding-left: ${({ $left }) => $left}px;
`;

const GroupName = styled.div`
  margin-top: 3px;
  line-height: 20px;
  text-align: center;
  color: #666;
`;

const BigButton = styled.button`
  display: flex;
  flex-direction: column;
  align-items: center;
  width: ${({ $wide }) => ($wide ? 62 : 42)}px;
  padding-top: 3px;
`;

const BigLabel = styled.span`
  line-height: 20px;
  margin-bottom: 3px;
`;

const CaretSvg = styled.svg`
  color: #444;
`;

const ToolGrid = styled.div`
  display: grid;
  grid-template-columns: ${({ $columns }) => $columns};
  grid-auto-rows: 22px;
  padding-left: 4px;
`;

const IconButton = styled.button`
  display: flex;
  align-items: center;
  gap: 7px;
`;

const ToolStack = styled.div`
  display: grid;
  grid-auto-rows: 22px;
  padding-left: 4px;
`;

const TextButton = styled.button`
  display: flex;
  align-items: center;
  gap: 2px;
  line-height: 18px;
`;

const ToolLabel = styled.span`
  padding: 0 3px 3px 0;
`;

const PropertyGrid = styled.div`
  display: grid;
  grid-template-columns: 28px 124px 16px 124px;
  grid-template-rows: 21px 21px;
  column-gap: 4px;
  row-gap: 9px;
  align-content: start;
  padding: 9px 0 0 5px;
`;

const ComboBox = styled.div`
  display: flex;
  align-items: center;
  border: 1px solid #b8b8b8;
  background: #fff;
  padding-right: 4px;
  ${CaretSvg} {
    color: #777;
  }
`;

const ComboSelect = styled.select`
  appearance: none;
  flex: 1;
  min-width: 0;
  margin: 0 5px 0 3px;
  border: none;
  padding: 0;
  background: transparent;
  font-family: Roboto, "Noto Sans CJK SC", sans-serif;
  font-size: 12px;
  color: #000;
`;

const ColorChip = styled.span`
  flex: none;
  width: 12px;
  height: 12px;
  margin: 0 3px 0 7px;
  border: 1px solid #0078d7;
`;

const LineSample = styled.span`
  flex: none;
  width: ${({ $width }) => $width}px;
  margin-left: ${({ $left }) => $left}px;
  border-top: 1px solid ${({ $color }) => $color};
`;

const Workspace = styled.div`
  flex: 1;
  min-height: 0;
  display: flex;
`;

const Dock = styled.aside`
  flex: none;
  width: 32px;
  display: flex;
  align-items: flex-start;
  gap: 4px;
  padding: 7px 0 0 2px;
`;

const DockGrip = styled.div`
  width: 6px;
  height: 42px;
  background: #d2d2d2;
`;

const DockTab = styled.button`
  display: flex;
  flex-direction: column;
  align-items: center;
`;

const DockName = styled.span`
  writing-mode: vertical-rl;
  text-orientation: sideways;
  line-height: 16px;
`;

const Main = styled.main`
  flex: 1;
  min-width: 0;
  display: flex;
  flex-direction: column;
`;

const DocTabs = styled.div`
  display: flex;
  height: 22px;
  padding: 2px 0 0 1px;
`;

const DocTab = styled.div`
  display: flex;
  align-items: center;
  gap: 12px;
  padding: 0 6px 0 13px;
  border: 1px solid #8c8c8c;
  border-width: 1px 1px 0 0;
  border-top-right-radius: 2px;
  background: #fff;
`;

const DocName = styled.span`
  min-width: 56px;
  padding-bottom: 2px;
  font-size: 12px;
  font-weight: 700;
  line-height: 17px;
`;

const CloseButton = styled.button`
  width: 8px;
  height: 8px;
`;

const Canvas = styled.div`
  flex: 1;
  min-height: 0;
  overflow: hidden;
  background: #000;
`;

const Drawing = styled.svg`
  fill: none;
  stroke: #fff;
  stroke-width: 1;
  stroke-linecap: square;
  shape-rendering: crispEdges;
`;

const CadText = styled.text`
  fill: ${({ $warm }) => ($warm ? "#d8a3a3" : "#8cc4cf")};
  stroke: none;
  font-family: "Liberation Mono", monospace;
  font-size: 7px;
  font-weight: 700;
`;

const TinyText = styled.text`
  fill: #fff;
  stroke: none;
  font-family: "Noto Sans CJK SC", sans-serif;
  font-size: 5px;
`;

const LayoutBar = styled.div`
  display: flex;
  height: 17px;
  border-top: 1px solid #555;
`;

const Pager = styled.button`
  display: flex;
  align-items: center;
  width: 16px;
  padding-left: 3px;
`;

const LayoutTab = styled.button`
  width: ${({ $width }) => $width}px;
  height: 16px;
  line-height: 12px;
  padding-bottom: 2px;
  background: ${({ $active }) => ($active ? "#fff" : "transparent")};
  font-weight: ${({ $active }) => ($active ? 700 : 400)};
  border-bottom: 1px solid #888;
`;

const Splitter = styled.div`
  height: 6px;
  background: #cbcbcb;
`;

const CommandLine = styled.div`
  height: 22px;
  padding-left: 4px;
  line-height: 20px;
`;

const Watermark = styled.div`
  position: fixed;
  right: 4px;
  bottom: 10px;
  font-family: "Liberation Sans", sans-serif;
  font-size: 27px;
  line-height: 32px;
  color: #e2e2e2;
  text-shadow: 1px 1px 1px #888;
`;

export default App;
